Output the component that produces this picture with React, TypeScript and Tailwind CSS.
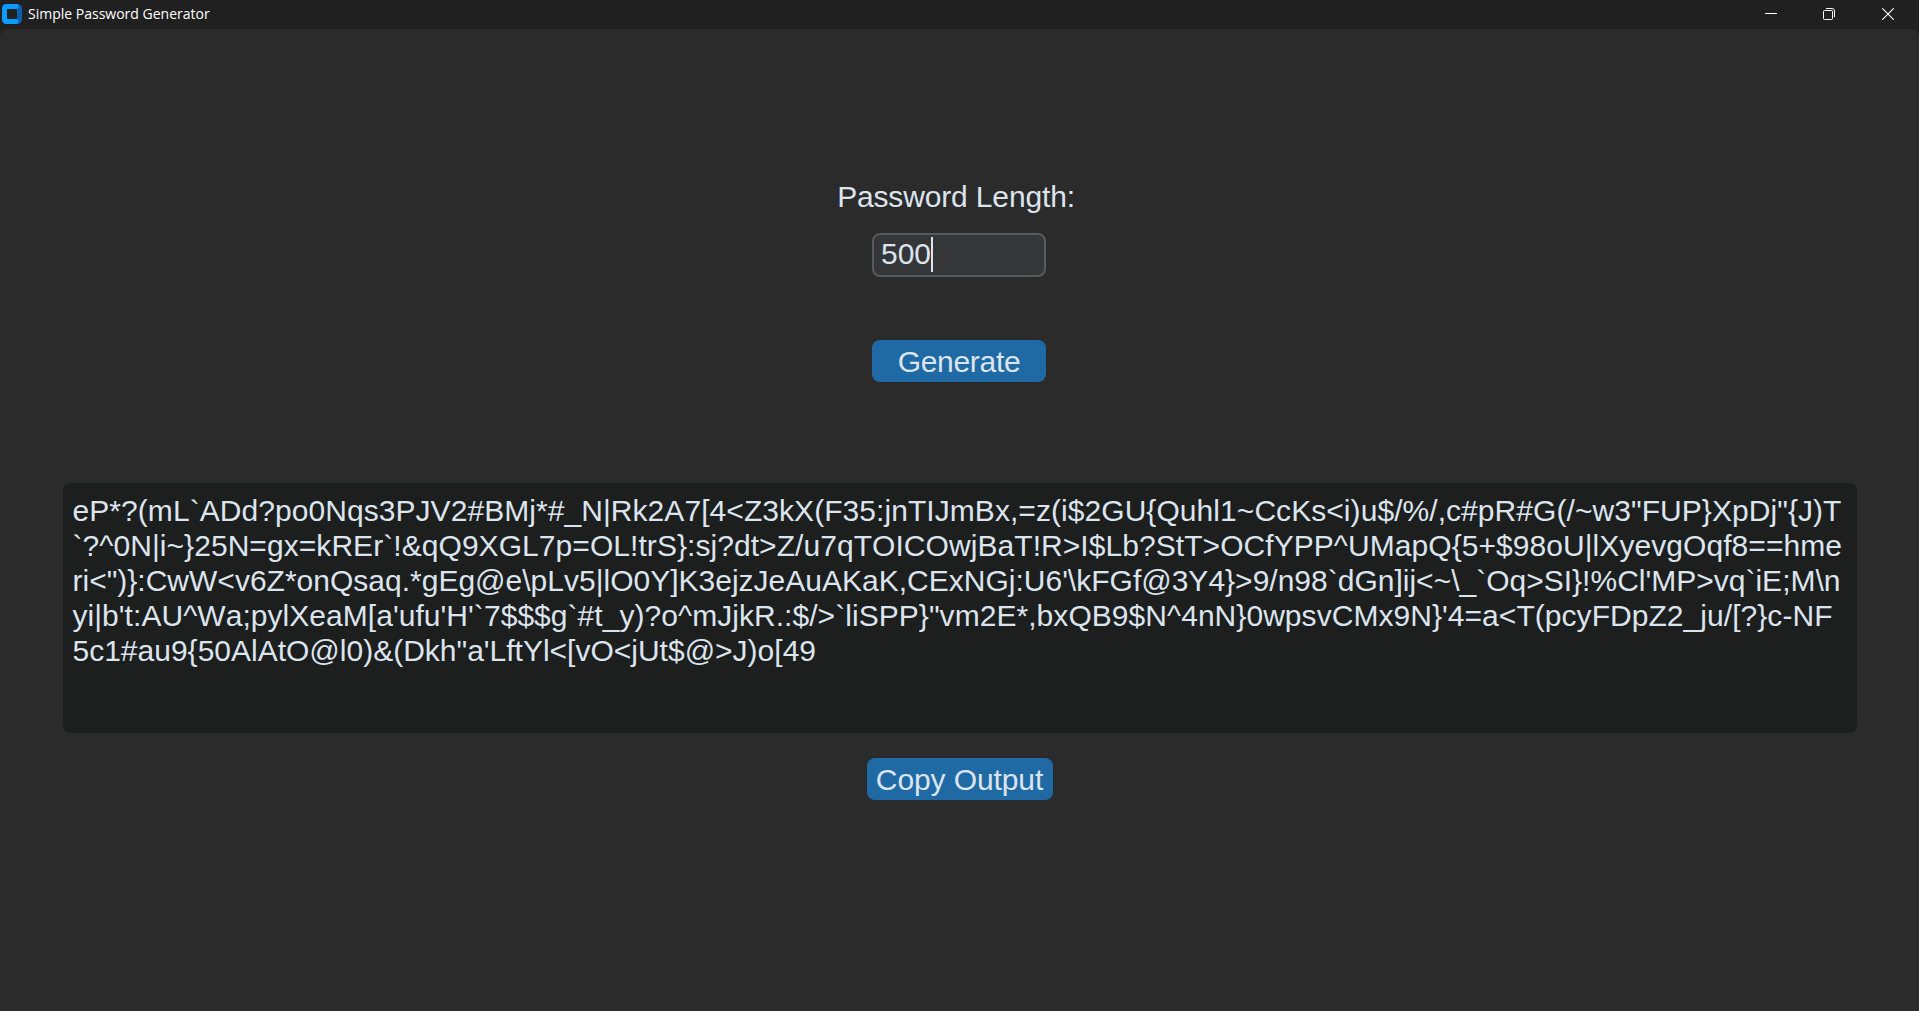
const lines: { text: string; spacing: string }[] = [
  { text: "eP*?(mL`ADd?po0Nqs3PJV2#BMj*#_N|Rk2A7[4<Z3kX(F35:jnTIJmBx,=z(i$2GU{Quhl1~CcKs<i)u$/%/,c#pR#G(/~w3\"FUP}XpDj\"{J)T", spacing: "tracking-[0.06px]" },
  { text: "`?^0N|i~}25N=gx=kREr`!&qQ9XGL7p=OL!trS}:sj?dt>Z/u7qTOICOwjBaT!R>I$Lb?StT>OCfYPP^UMapQ{5+$98oU|lXyevgOqf8==hme", spacing: "tracking-[0.06px]" },
  { text: "ri<\")}:CwW<v6Z*onQsaq.*gEg@e\\pLv5|lO0Y]K3ejzJeAuAKaK,CExNGj:U6'\\kFGf@3Y4}>9/n98`dGn]ij<~\\_`Oq>SI}!%Cl'MP>vq`iE;M\\n", spacing: "tracking-[0.005px]" },
  { text: "yi|b't:AU^Wa;pylXeaM[a'ufu'H'`7$$$g`#t_y)?o^mJjkR.:$/>`liSPP}\"vm2E*,bxQB9$N^4nN}0wpsvCMx9N}'4=a<T(pcyFDpZ2_ju/[?}c-NF", spacing: "tracking-[0.05px]" },
  { text: "5c1#au9{50AlAtO@l0)&(Dkh\"a'LftYl<[vO<jUt$@>J)o[49", spacing: "tracking-[0px]" },
];

function AppIcon() {
  return (
    <svg className="ml-0.5 h-5 w-5" viewBox="0 0 20 20">
      <rect width="20" height="20" rx="4.5" fill="#0a5fae" />
      <path d="M4.5 0H14a2.5 2.5 0 0 1 0 5H5v10h9a2.5 2.5 0 0 1 0 5H4.5A4.5 4.5 0 0 1 0 15.5v-11A4.5 4.5 0 0 1 4.5 0Z" fill="#0c9cfb" />
      <rect x="5" y="5" width="10" height="10" rx="1.2" fill="#212121" />
    </svg>
  );
}

function TitleBar() {
  return (
    <header className="flex h-[29px] items-start bg-[#202020]">
      <div className="flex h-7 items-center">
        <AppIcon />
        <h1 className="ml-1.5 font-['Open_Sans',sans-serif] text-[14px] leading-7 text-white">Simple Password Generator</h1>
      </div>
      <div className="mr-px ml-auto flex h-7 text-white">
        <button className="flex w-[58px] items-center justify-center" aria-label="Minimize">
          <svg className="h-3 w-3" viewBox="0 0 12 12"><path d="M0 5.5h12" stroke="currentColor" /></svg>
        </button>
        <button className="flex w-[58px] items-center justify-center" aria-label="Restore">
          <svg className="h-3 w-3" viewBox="0 0 12 12" fill="none" stroke="currentColor">
            <rect x=".5" y="2.5" width="9" height="9" rx="1" />
            <path d="M3 .5h6A2.5 2.5 0 0 1 11.5 3v6.2" />
          </svg>
        </button>
        <button className="flex w-[60px] items-center justify-center" aria-label="Close">
          <svg className="h-3 w-3" viewBox="0 0 12 12"><path d="M.3.3 11.7 11.7M11.7.3.3 11.7" stroke="currentColor" strokeWidth="1.1" /></svg>
        </button>
      </div>
    </header>
  );
}

export default function App() {
  return (
    <div className="h-[1011px] w-[1919px] overflow-hidden bg-[#202020] font-['Liberation_Sans',sans-serif] text-[30px] leading-[35px] text-[#dce4ee] [font-kerning:none]">
      <TitleBar />
      <main className="flex h-[982px] flex-col items-center rounded-t-lg bg-[#2b2b2b] pt-[150px]">
        <label className="mr-[7px] tracking-[-0.15px] whitespace-nowrap">Password Length:</label>
        <div className="mt-[19px] mr-px flex h-11 w-[174px] items-center rounded-lg border-2 border-[#565b5e] bg-[#343638] pl-[7px]">
          <span className="mb-[3px]">500</span>
          <span className="mb-px h-[35px] w-0.5 bg-[#dce4ee]" />
        </div>
        <button className="mt-[63px] mr-px h-[42px] w-[174px] rounded-lg bg-[#1f6aa5] tracking-[-0.3px]">Generate</button>
        <section className="mt-[101px] h-[250px] w-[1794px] rounded-lg bg-[#1d1e1e] pt-[10px] pl-[10px]">
          {lines.map((line) => (
            <p key={line.text} className={"whitespace-pre " + line.spacing}>{line.text}</p>
          ))}
        </section>
        <button className="mt-[25px] h-[42px] w-[186px] rounded-lg bg-[#1f6aa5] tracking-[-0.1px] whitespace-nowrap">Copy Output</button>
      </main>
    </div>
  );
}
